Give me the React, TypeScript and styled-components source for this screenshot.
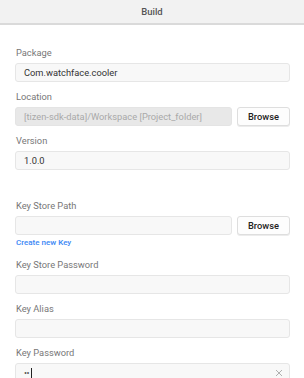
import styled, { createGlobalStyle } from 'styled-components'

const GlobalStyle = createGlobalStyle`
  html, body {
    margin: 0;
    padding: 0;
    background: #ffffff;
    font-family: Roboto, 'Liberation Sans', sans-serif;
  }
`

type Field = {
  label: string
  value?: string
  disabled?: boolean
  browse?: boolean
}

const topFields: Field[] = [
  { label: 'Package', value: 'Com.watchface.cooler' },
  { label: 'Location', value: '[tizen-sdk-data]/Workspace [Project_folder]', disabled: true, browse: true },
  { label: 'Version', value: '1.0.0' },
]

export default function App() {
  return (
    <>
      <GlobalStyle />
      <Panel>
        <Header>Build</Header>
        <Form>
          {topFields.map((f) => (
            <FieldGroup key={f.label}>
              <Label>{f.label}</Label>
              <Row>
                <Input $disabled={f.disabled}>{f.value}</Input>
                {f.browse && <BrowseButton>Browse</BrowseButton>}
              </Row>
            </FieldGroup>
          ))}

          <Spacer />

          <FieldGroup $tight>
            <Label>Key Store Path</Label>
            <Row>
              <Input />
              <BrowseButton>Browse</BrowseButton>
            </Row>
            <CreateLink>Create new Key</CreateLink>
          </FieldGroup>

          <FieldGroup>
            <Label>Key Store Password</Label>
            <Row>
              <Input />
            </Row>
          </FieldGroup>

          <FieldGroup>
            <Label>Key Alias</Label>
            <Row>
              <Input />
            </Row>
          </FieldGroup>

          <FieldGroup>
            <Label>Key Password</Label>
            <Row>
              <Input>
                <Dots>••</Dots>
                <Caret />
                <Clear>
                  <svg width="8" height="8" viewBox="0 0 8 8">
                    <path d="M1 1 L7 7 M7 1 L1 7" stroke="#b0b0b0" strokeWidth="1" />
                  </svg>
                </Clear>
              </Input>
            </Row>
          </FieldGroup>
        </Form>
      </Panel>
    </>
  )
}

const Panel = styled.div`
  width: 304px;
  height: 378px;
  overflow: hidden;
  background: #ffffff;
`

const Header = styled.div`
  height: 23px;
  line-height: 23px;
  background: #f2f2f2;
  border-bottom: 2px solid #dadada;
  text-align: center;
  font-size: 9.5px;
  font-weight: 500;
  color: #555555;
`

const Form = styled.div`
  padding: 22px 14px 0 15px;
  display: flex;
  flex-direction: column;
`

const FieldGroup = styled.div<{ $tight?: boolean }>`
  display: flex;
  flex-direction: column;
  margin-bottom: ${(p) => (p.$tight ? '11px' : '9px')};
`

const Label = styled.div`
  height: 12px;
  line-height: 12px;
  margin: 0 0 4px 1px;
  font-size: 9.3px;
  color: #777777;
`

const Row = styled.div`
  display: flex;
  gap: 5px;
`

const Input = styled.div<{ $disabled?: boolean }>`
  position: relative;
  flex: 1 1 auto;
  min-width: 0;
  box-sizing: border-box;
  height: 19px;
  padding: 0 8px;
  border: 1px solid ${(p) => (p.$disabled ? '#e4e4e4' : '#e6e6e6')};
  border-radius: 3px;
  background: ${(p) => (p.$disabled ? '#e8e8e8' : '#f8f8f8')};
  color: ${(p) => (p.$disabled ? '#a9a9a9' : '#333333')};
  font-size: 9.3px;
  white-space: nowrap;
  overflow: hidden;
  display: flex;
  align-items: center;
`

const BrowseButton = styled.div`
  flex: none;
  box-sizing: border-box;
  width: 53px;
  height: 19px;
  line-height: 17px;
  text-align: center;
  border: 1px solid #dedede;
  border-radius: 3px;
  background: #fdfdfd;
  box-shadow: 0 1px 0 #ececec;
  font-size: 9.3px;
  font-weight: 500;
  color: #222222;
`

const Spacer = styled.div`
  height: 21px;
`

const CreateLink = styled.div`
  margin: 3px 0 0 1px;
  height: 10px;
  line-height: 10px;
  font-size: 8px;
  font-weight: 500;
  color: #3b87f5;
`

const Dots = styled.span`
  font-size: 9px;
  color: #555555;
  letter-spacing: -0.5px;
`

const Caret = styled.span`
  display: inline-block;
  width: 1px;
  height: 10px;
  margin-left: 2px;
  background: #222222;
`

const Clear = styled.span`
  position: absolute;
  right: 6px;
  top: 5px;
  display: flex;
`
